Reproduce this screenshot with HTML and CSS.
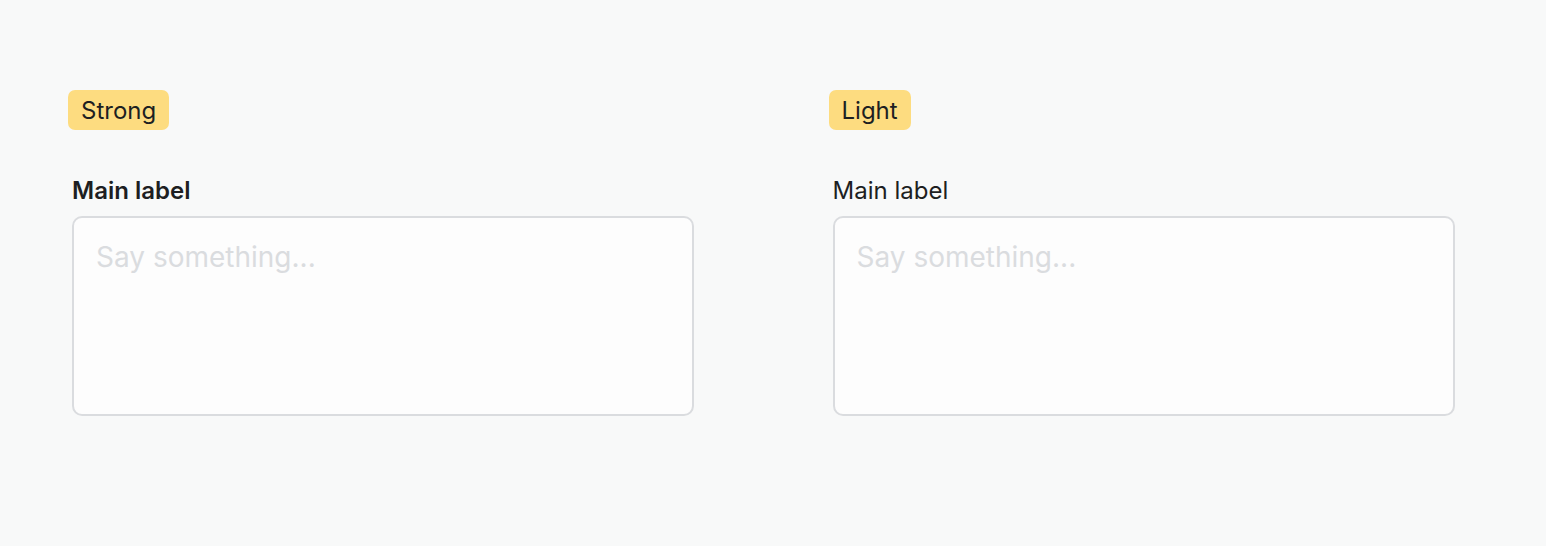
FILE: index.html
```html
<!DOCTYPE html>
<html>
<head>
<meta charset="utf-8">
<link rel="stylesheet" href="styles.css">
</head>
<body>
<div class="page">
  <section class="col">
    <span class="badge">Strong</span>
    <label class="label label-strong">Main label</label>
    <textarea class="field" placeholder="Say something..."></textarea>
  </section>
  <section class="col">
    <span class="badge">Light</span>
    <label class="label label-light">Main label</label>
    <textarea class="field" placeholder="Say something..."></textarea>
  </section>
</div>
</body>
</html>
```
FILE: styles.css
```css
html, body {
  margin: 0;
  padding: 0;
  background: #f8f9f9;
  font-family: Inter, "Noto Sans", sans-serif;
  color: #1d1f22;
}
.page {
  display: flex;
  gap: 138.5px;
  padding: 90px 0 0 72px;
}
.col {
  width: 622px;
  display: flex;
  flex-direction: column;
  align-items: flex-start;
}
.badge {
  margin-left: -4px;
  height: 40px;
  box-sizing: border-box;
  padding: 0 13px;
  display: flex;
  align-items: center;
  background: #fddc80;
  border-radius: 7px;
  font-size: 24px;
  color: #1d1f22;
}
.label {
  margin-top: 48px;
  font-size: 24px;
  line-height: 26px;
  color: #1d1f22;
}
.label-strong { font-weight: 600; }
.label-light { font-weight: 400; }
.field {
  margin-top: 12px;
  width: 622px;
  height: 200px;
  box-sizing: border-box;
  border: 2px solid #dadcdf;
  border-radius: 10px;
  background: #fdfdfd;
  padding: 22px 22px;
  font-family: Inter, "Noto Sans", sans-serif;
  font-size: 28px;
  resize: none;
  outline: none;
}
.field::placeholder {
  color: #dadcdf;
}
```
